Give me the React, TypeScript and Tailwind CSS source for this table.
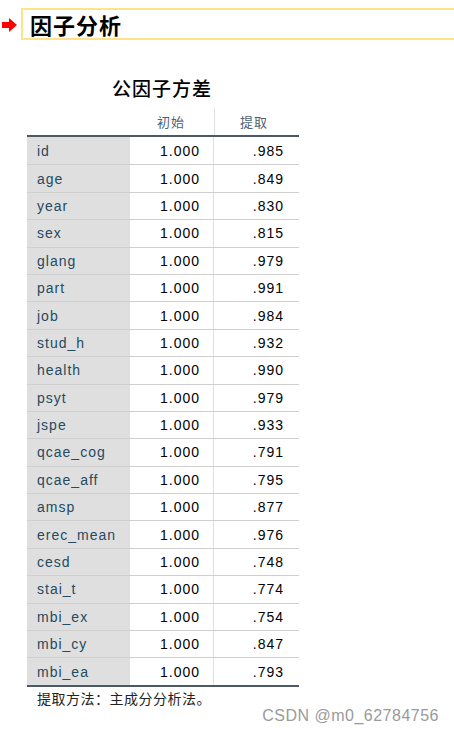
import React from 'react'

const rows: [string, string, string][] = [
  ['id', '1.000', '.985'],
  ['age', '1.000', '.849'],
  ['year', '1.000', '.830'],
  ['sex', '1.000', '.815'],
  ['glang', '1.000', '.979'],
  ['part', '1.000', '.991'],
  ['job', '1.000', '.984'],
  ['stud_h', '1.000', '.932'],
  ['health', '1.000', '.990'],
  ['psyt', '1.000', '.979'],
  ['jspe', '1.000', '.933'],
  ['qcae_cog', '1.000', '.791'],
  ['qcae_aff', '1.000', '.795'],
  ['amsp', '1.000', '.877'],
  ['erec_mean', '1.000', '.976'],
  ['cesd', '1.000', '.748'],
  ['stai_t', '1.000', '.774'],
  ['mbi_ex', '1.000', '.754'],
  ['mbi_cy', '1.000', '.847'],
  ['mbi_ea', '1.000', '.793'],
]

export default function App() {
  return (
    <div className="relative w-[454px] h-[732px] bg-white overflow-hidden font-['Liberation_Sans','Noto_Sans_CJK_SC',sans-serif]">
      {/* Heading bar */}
      <div className="flex items-center pt-2">
        <svg width="21" height="16" viewBox="0 0 21 16" className="shrink-0 mt-[1px]">
          <path d="M2 5 H9 V1 L17 8 L9 15 V11 H2 Z" fill="#ff0000" />
        </svg>
        <div className="shrink-0 w-[460px] h-[32px] border-2 border-[#ffe38c] flex items-center pl-[7px]">
          <span className="text-[22px] font-bold text-black leading-none font-['Noto_Sans_CJK_SC',sans-serif] tracking-[1px]">因子分析</span>
        </div>
      </div>

      {/* Communalities table */}
      <div className="ml-[27px] mt-[35px] w-[272px]">
        <div className="text-center text-[19px] text-black leading-[26px] font-['Noto_Sans_CJK_SC',sans-serif] font-medium tracking-[1px] pr-[2px]">公因子方差</div>
        <div className="flex h-[27px] mt-[7px] text-[13px] text-[#4d6272] font-['Noto_Sans_CJK_SC',sans-serif] tracking-[1px]">
          <div className="w-[103px]" />
          <div className="w-[84px] flex items-center justify-center pr-[2px]">初始</div>
          <div className="w-[85px] flex items-center justify-center pr-[6px] border-l border-[#e0e0e0]">提取</div>
        </div>
        <div className="border-t-2 border-[#4b5a66] border-b-2">
          {rows.map(([name, init, ext], i) => (
            <div
              key={name}
              className={`flex h-[27.4px] text-[14px] leading-none tracking-[1px] ${i > 0 ? 'border-t border-[#cfcfcf]' : ''}`}
            >
              <div className="w-[103px] bg-[#dfdfdf] flex items-center pl-[10px] text-[#264a60]">{name}</div>
              <div className="w-[84px] flex items-center justify-end pr-[13px] text-[#010205] border-r border-[#e0e0e0]">{init}</div>
              <div className="flex-1 flex items-center justify-end pr-[15px] text-[#010205]">{ext}</div>
            </div>
          ))}
        </div>
        <div className="pl-[10px] pt-[2px] text-[14px] text-[#222] leading-[18px] font-['Noto_Sans_CJK_SC',sans-serif] tracking-[0.5px]">提取方法：主成分分析法。</div>
      </div>

      {/* watermark */}
      <div className="absolute right-[15px] top-[704px] text-[16px] text-[#9a9a9a] font-['Liberation_Sans',sans-serif] tracking-[0.5px] [text-shadow:0_0_1px_#ffffff]">
        CSDN @m0_62784756
      </div>
    </div>
  )
}
